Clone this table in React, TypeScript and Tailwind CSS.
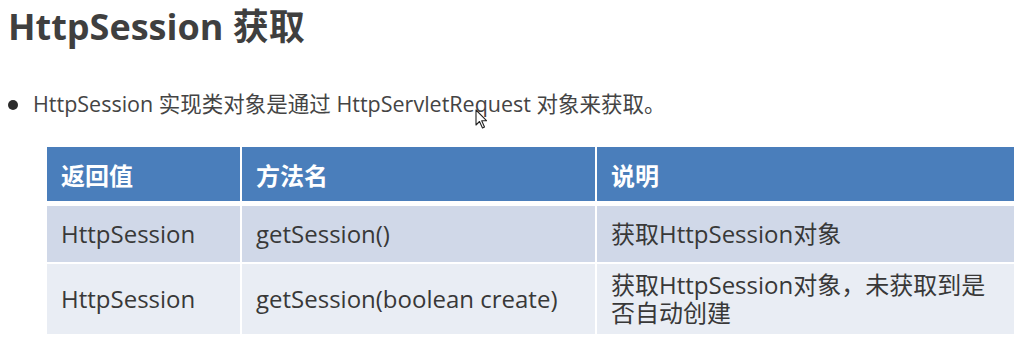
import React from "react";

const font = { fontFamily: '"Open Sans", "Noto Sans CJK SC", sans-serif' };

function Cursor() {
  return (
    <svg
      className="absolute left-[475px] top-[109px]"
      width="14"
      height="21"
      viewBox="0 0 14 21"
    >
      <path
        d="M1 1 L1 16 L4.5 12.5 L7.5 19 L9.5 18 L6.7 11.7 L11.5 11.7 Z"
        fill="#ffffff"
        stroke="#222222"
        strokeWidth="1.1"
        strokeLinejoin="round"
      />
    </svg>
  );
}

export default function App() {
  const rows = [
    { ret: "HttpSession", name: "getSession()", desc: "获取HttpSession对象", bg: "bg-[#d0d8e8]", h: "h-[56px]" },
    {
      ret: "HttpSession",
      name: "getSession(boolean create)",
      desc: "获取HttpSession对象，未获取到是否自动创建",
      bg: "bg-[#e9edf4]",
      h: "h-[70px]",
    },
  ];
  return (
    <div className="relative w-[1016px] h-[337px] bg-white overflow-hidden" style={font}>
      <div className="pt-[5px] pl-[8px] text-[36px] leading-[44px] font-bold text-[#3f3f3f]">
        HttpSession 获取
      </div>
      <div className="mt-[41px] flex items-center pl-[8px] text-[21.5px] leading-[28px] text-[#444444]">
        <span className="w-[10px] h-[10px] rounded-full bg-[#2a2a2a] mr-[15px] mt-[2px]" />
        <span>HttpSession 实现类对象是通过 HttpServletRequest 对象来获取。</span>
      </div>
      <Cursor />
      <div className="mt-[29px] ml-[47px] w-[967px] flex flex-col">
        <div className="grid grid-cols-[193px_353px_1fr] gap-x-[2px] h-[54px] bg-white">
          {["返回值", "方法名", "说明"].map((t) => (
            <div
              key={t}
              className="bg-[#4a7ebb] flex items-center pl-[14px] pt-[4px] text-[24px] font-bold text-white"
            >
              {t}
            </div>
          ))}
        </div>
        <div className="h-[5px]" />
        {rows.map((r, i) => (
          <div
            key={i}
            className={`grid grid-cols-[193px_353px_1fr] gap-x-[2px] ${r.h} ${i > 0 ? "mt-[2px]" : ""}`}
          >
            <div className={`${r.bg} flex items-center pl-[14px] text-[24px] text-[#383838]`}>{r.ret}</div>
            <div className={`${r.bg} flex items-center pl-[14px] text-[24px] text-[#383838]`}>{r.name}</div>
            <div className={`${r.bg} flex items-center pl-[14px] pr-[20px] text-[24px] leading-[28px] text-[#383838]`}>
              <span>{r.desc}</span>
            </div>
          </div>
        ))}
      </div>
    </div>
  );
}
